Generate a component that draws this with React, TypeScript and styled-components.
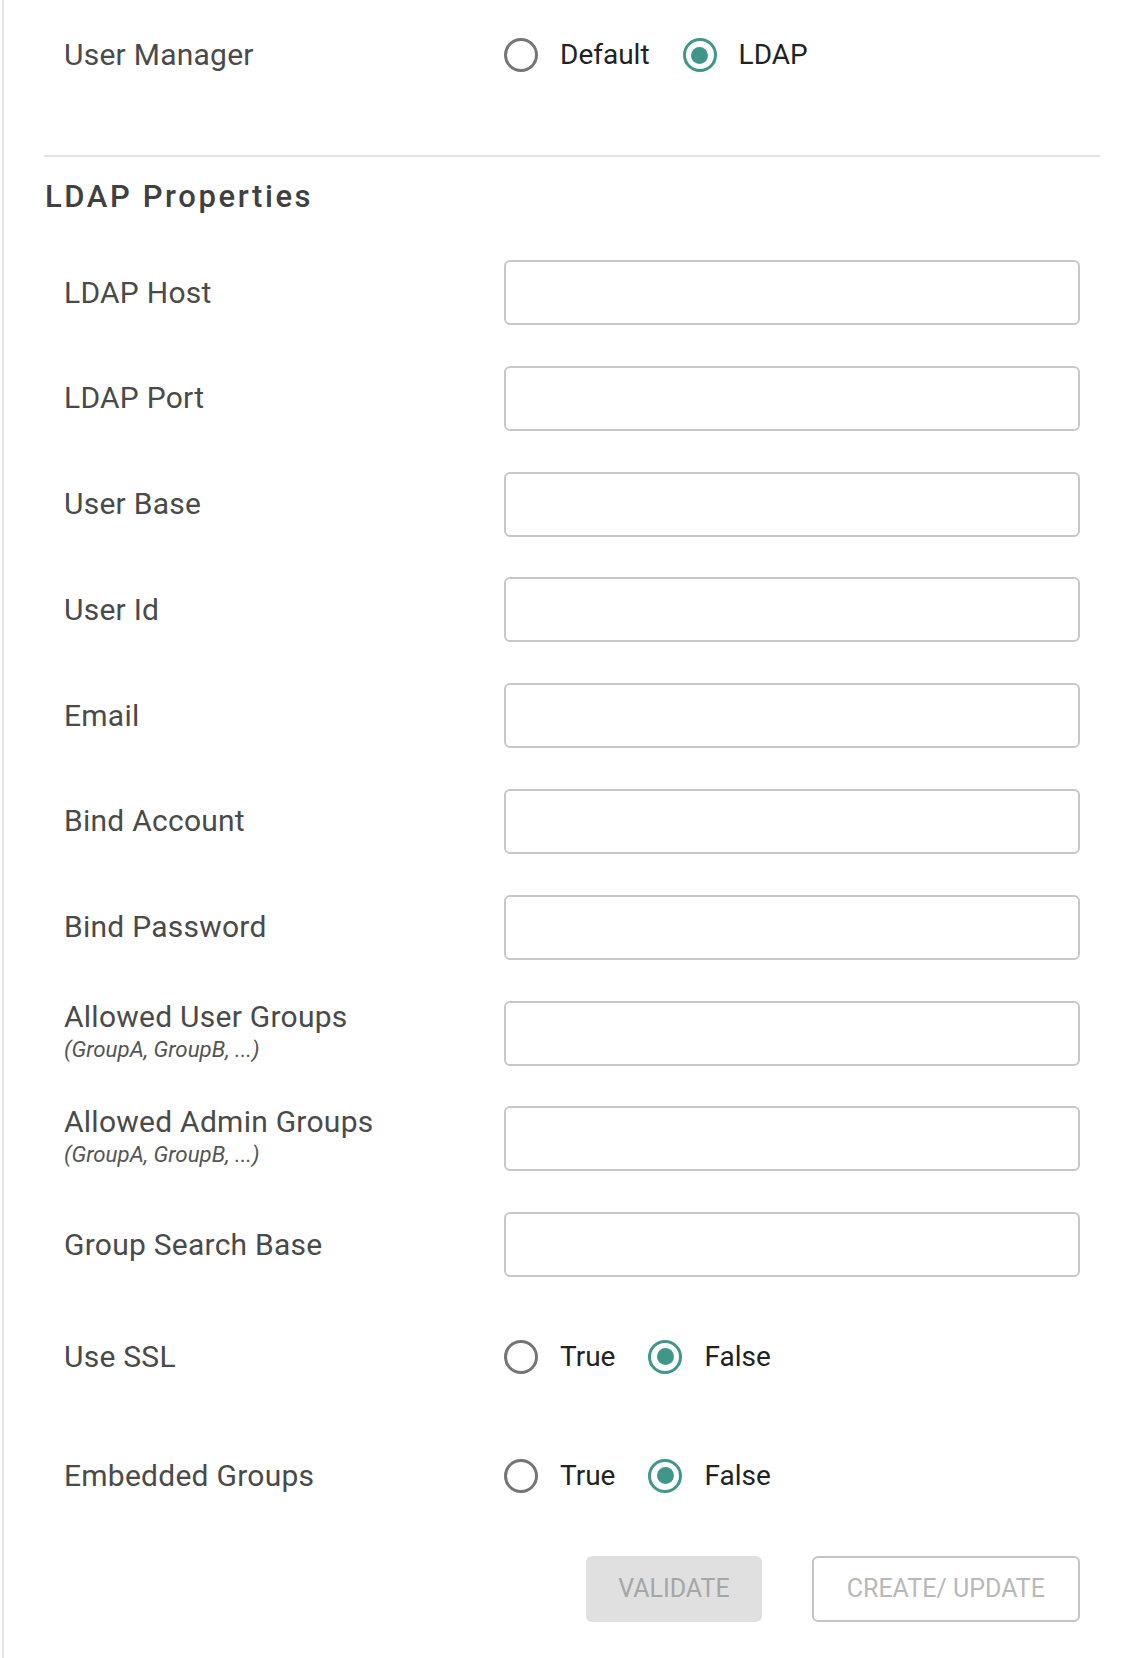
import React from "react";
import styled, { createGlobalStyle } from "styled-components";

const GlobalStyle = createGlobalStyle`
  html, body { margin: 0; padding: 0; background: #ffffff; }
  body { font-family: Roboto, "Noto Sans", "Liberation Sans", sans-serif; }
  * { box-sizing: border-box; }
`;

const Page = styled.div`
  margin-left: 2px;
  border-left: 2px solid #e6e6e6;
  min-height: 1658px;
  padding: 37px 32px 0 40px;
  display: flex;
  flex-direction: column;
`;

const TopSection = styled.div`
  padding-bottom: 84px;
`;

const Divider = styled.hr`
  margin: 0;
  border: none;
  height: 2px;
  background: #e3e3e3;
`;

const Heading = styled.h2`
  margin: 22px 0 0 1px;
  font-size: 31px;
  line-height: 36px;
  font-weight: 500;
  letter-spacing: 2.6px;
  color: #404040;
`;

const Fields = styled.div`
  margin-top: 45px;
  display: flex;
  flex-direction: column;
  gap: 40.8px;
`;

const Row = styled.div<{ $height: number }>`
  display: grid;
  grid-template-columns: 440px 1fr;
  align-items: center;
  padding: 0 20px 0 20px;
  height: ${(p) => p.$height}px;
`;

const LabelBlock = styled.div`
  display: flex;
  flex-direction: column;
`;

const Label = styled.span<{ $compact?: boolean }>`
  font-size: 30px;
  letter-spacing: 0.25px;
  line-height: ${(p) => (p.$compact ? "32px" : "36px")};
  color: #4a4a4a;
`;

const Hint = styled.span`
  font-size: 22.3px;
  line-height: 33px;
  font-style: italic;
  color: #555555;
`;

const TextInput = styled.input`
  height: 65px;
  width: 100%;
  border: 2px solid #c7c7c7;
  border-radius: 6px;
  background: #ffffff;
  font-family: inherit;
  font-size: 28px;
  padding: 0 16px;
  outline: none;
`;

const RadioGroup = styled.div`
  display: flex;
  align-items: center;
  gap: 33px;
`;

const RadioLabel = styled.label`
  display: flex;
  align-items: center;
  gap: 22px;
  cursor: pointer;
`;

const RadioCircle = styled.span<{ $checked: boolean }>`
  width: 34px;
  height: 34px;
  border-radius: 50%;
  border: 3px solid ${(p) => (p.$checked ? "#41968a" : "#757575")};
  display: flex;
  align-items: center;
  justify-content: center;
  flex-shrink: 0;
  &::after {
    content: "";
    width: 17px;
    height: 17px;
    border-radius: 50%;
    background: #41968a;
    transform: scale(${(p) => (p.$checked ? 1 : 0)});
  }
`;

const OptionText = styled.span`
  font-size: 28px;
  line-height: 34px;
  color: #222222;
`;

const Actions = styled.div`
  display: flex;
  justify-content: flex-end;
  gap: 50px;
  padding: 0 20px 0 20px;
`;

const Button = styled.button<{ $variant: "filled" | "outlined" }>`
  height: 66px;
  border-radius: 6px;
  font-family: inherit;
  font-size: 25px;
  text-transform: uppercase;
  cursor: default;
  padding: ${(p) => (p.$variant === "filled" ? "0 32px" : "0 33px")};
  background: ${(p) => (p.$variant === "filled" ? "#e0e0e0" : "#ffffff")};
  border: ${(p) => (p.$variant === "filled" ? "none" : "2px solid #c4c4c4")};
  color: ${(p) => (p.$variant === "filled" ? "#a6a6a6" : "#b8b8b8")};
`;

type RadioOptionsProps = { options: string[]; value: string };

const RadioOptions = ({ options, value }: RadioOptionsProps) => (
  <RadioGroup role="radiogroup">
    {options.map((o) => (
      <RadioLabel key={o}>
        <RadioCircle $checked={o === value} />
        <OptionText>{o}</OptionText>
      </RadioLabel>
    ))}
  </RadioGroup>
);

const fields: { label: string; hint?: string }[] = [
  { label: "LDAP Host" },
  { label: "LDAP Port" },
  { label: "User Base" },
  { label: "User Id" },
  { label: "Email" },
  { label: "Bind Account" },
  { label: "Bind Password" },
  { label: "Allowed User Groups", hint: "(GroupA, GroupB, ...)" },
  { label: "Allowed Admin Groups", hint: "(GroupA, GroupB, ...)" },
  { label: "Group Search Base" },
];

export default function App() {
  return (
    <>
      <GlobalStyle />
      <Page>
        <TopSection>
          <Row $height={34}>
            <Label>User Manager</Label>
            <RadioOptions options={["Default", "LDAP"]} value="LDAP" />
          </Row>
        </TopSection>
        <Divider />
        <Heading>LDAP Properties</Heading>
        <Fields>
          {fields.map((f) => (
            <Row key={f.label} $height={65}>
              <LabelBlock>
                <Label $compact={!!f.hint}>{f.label}</Label>
                {f.hint && <Hint>{f.hint}</Hint>}
              </LabelBlock>
              <TextInput type={f.label === "Bind Password" ? "password" : "text"} />
            </Row>
          ))}
          <Row $height={78}>
            <Label>Use SSL</Label>
            <RadioOptions options={["True", "False"]} value="False" />
          </Row>
          <Row $height={78}>
            <Label>Embedded Groups</Label>
            <RadioOptions options={["True", "False"]} value="False" />
          </Row>
          <Actions>
            <Button $variant="filled">Validate</Button>
            <Button $variant="outlined">Create/ Update</Button>
          </Actions>
        </Fields>
      </Page>
    </>
  );
}
